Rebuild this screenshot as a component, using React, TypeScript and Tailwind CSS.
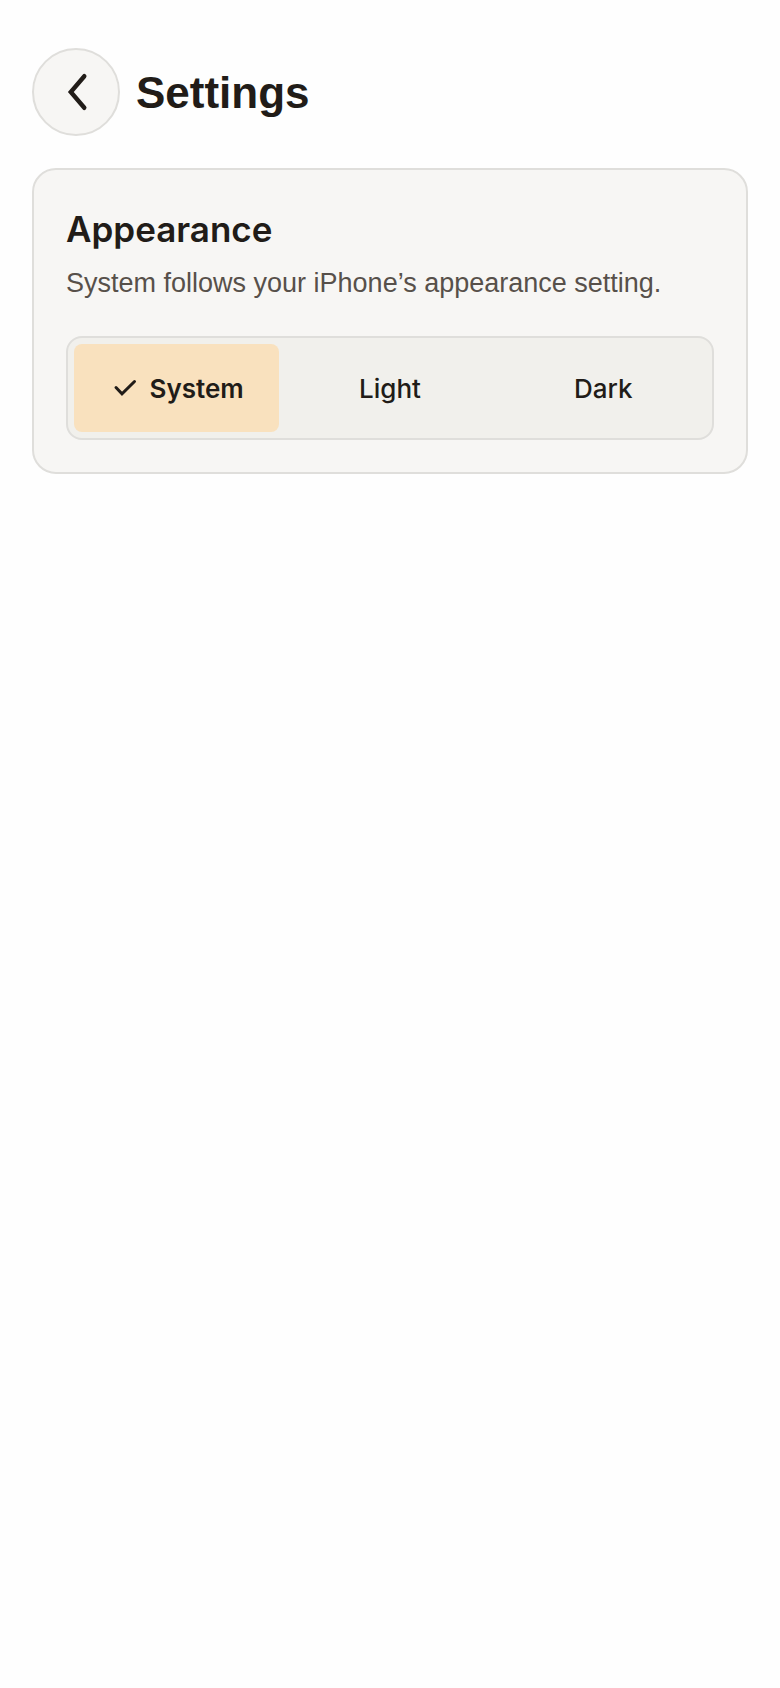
import { useState } from "react";

const options = ["System", "Light", "Dark"];

export default function App() {
  const [selected, setSelected] = useState("System");

  return (
    <main className="min-h-screen bg-[#fefefe] px-8 py-12 font-['Inter',sans-serif] text-[#211c18]">
      <header className="flex items-center gap-4">
        <button
          type="button"
          aria-label="Back"
          className="flex size-22 shrink-0 items-center justify-center rounded-full border-2 border-[#dfdedb] bg-[#f7f6f4]"
        >
          <svg viewBox="0 0 40 40" className="size-10" fill="none" stroke="currentColor" strokeWidth="4.4" strokeLinecap="round" strokeLinejoin="miter" aria-hidden="true">
            <path d="M28.3 4.2 14.8 20 28.3 35.8" />
          </svg>
        </button>
        <h1 className="pt-0.5 font-['Liberation_Sans',sans-serif] text-[44px] leading-14 font-bold">Settings</h1>
      </header>

      <section className="mt-8 rounded-3xl border-2 border-[#dfdedb] bg-[#f7f6f4] p-8">
        <h2 id="appearance" className="text-[35px] leading-[54px] font-semibold">Appearance</h2>
        <p className="mt-1.5 font-['Liberation_Sans',sans-serif] text-[27px] leading-[42px] text-[#57504a]">
          System follows your iPhone’s appearance setting.
        </p>
        <div
          role="group"
          aria-labelledby="appearance"
          className="mt-8 grid grid-cols-3 gap-2 rounded-2xl border-2 border-[#dfdedb] bg-[#f1f0ec] p-1.5"
        >
          {options.map((option) => (
            <button
              key={option}
              type="button"
              aria-pressed={selected === option}
              onClick={() => setSelected(option)}
              className={
                selected === option
                  ? "flex h-22 items-center justify-center gap-3 rounded-lg bg-[#f9e1be] text-[26px] font-semibold"
                  : "flex h-22 items-center justify-center gap-3 rounded-lg text-[26px] font-medium"
              }
            >
              {selected === option && (
                <svg viewBox="0 0 28 28" className="size-7" fill="none" stroke="currentColor" strokeWidth="3" strokeLinecap="round" aria-hidden="true">
                  <path d="M6 13.5 12 19.8 24.5 7.5" />
                </svg>
              )}
              {option}
            </button>
          ))}
        </div>
      </section>
    </main>
  );
}
